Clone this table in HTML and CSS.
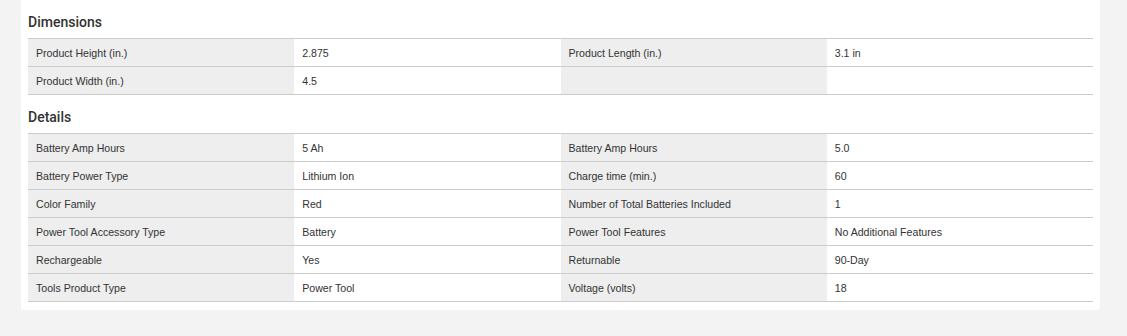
FILE: index.html
```html
<!DOCTYPE html>
<html lang="en">
<head>
<meta charset="utf-8">
<title>Specifications</title>
<link rel="stylesheet" href="styles.css">
</head>
<body>
<div class="card">
  <section class="spec-group">
    <h3 class="spec-title">Dimensions</h3>
    <table class="spec-table">
      <tr><td class="k">Product Height (in.)</td><td class="v">2.875</td><td class="k">Product Length (in.)</td><td class="v">3.1 in</td></tr>
      <tr><td class="k">Product Width (in.)</td><td class="v">4.5</td><td class="k"></td><td class="v"></td></tr>
    </table>
  </section>
  <section class="spec-group">
    <h3 class="spec-title">Details</h3>
    <table class="spec-table">
      <tr><td class="k">Battery Amp Hours</td><td class="v">5 Ah</td><td class="k">Battery Amp Hours</td><td class="v">5.0</td></tr>
      <tr><td class="k">Battery Power Type</td><td class="v">Lithium Ion</td><td class="k">Charge time (min.)</td><td class="v">60</td></tr>
      <tr><td class="k">Color Family</td><td class="v">Red</td><td class="k">Number of Total Batteries Included</td><td class="v">1</td></tr>
      <tr><td class="k">Power Tool Accessory Type</td><td class="v">Battery</td><td class="k">Power Tool Features</td><td class="v">No Additional Features</td></tr>
      <tr><td class="k">Rechargeable</td><td class="v">Yes</td><td class="k">Returnable</td><td class="v">90-Day</td></tr>
      <tr><td class="k">Tools Product Type</td><td class="v">Power Tool</td><td class="k">Voltage (volts)</td><td class="v">18</td></tr>
    </table>
  </section>
</div>
</body>
</html>
```
FILE: styles.css
```css
html, body {
  margin: 0;
  padding: 0;
}
body {
  background: #f3f3f3;
  font-family: "Liberation Sans", Arial, sans-serif;
  color: #333;
}
.card {
  margin-left: 21px;
  width: 1079px;
  box-sizing: border-box;
  background: #fff;
  padding: 0 7px 8px 7px;
  border-radius: 0 0 3px 3px;
}
.spec-title {
  margin: 0;
  padding: 14px 0 8px 0;
  font-family: Roboto, "Liberation Sans", sans-serif;
  font-weight: 500;
  font-size: 14px;
  line-height: 16px;
  color: #333;
}
.spec-table {
  width: 100%;
  table-layout: fixed;
  border-collapse: separate;
  border-spacing: 0;
  border-top: 1px solid #ccc;
}
.spec-table td {
  width: 25%;
  padding: 1px 8px 0 8px;
  height: 26px;
  line-height: 26px;
  font-size: 10.6px;
  border-bottom: 1px solid #ccc;
  white-space: nowrap;
  vertical-align: middle;
}
.spec-table td.k {
  background: #eee;
}
.spec-table td.v {
  background: #fff;
}
```
